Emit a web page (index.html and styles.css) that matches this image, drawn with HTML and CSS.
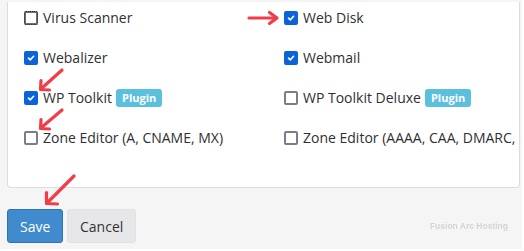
FILE: index.html
```html
<!DOCTYPE html>
<html>
<head>
<meta charset="utf-8">
<link rel="stylesheet" href="styles.css">
</head>
<body>
<div class="page">
  <div class="panel">
    <div class="grid">
      <label class="item"><span class="box focus"></span><span class="lbl">Virus Scanner</span></label>
      <label class="item"><span class="box on"><svg viewBox="0 0 14 14"><path d="M3.5 7.2 L6 9.6 L10.6 4.6" /></svg></span><span class="lbl">Web Disk</span></label>
      <label class="item"><span class="box on"><svg viewBox="0 0 14 14"><path d="M3.5 7.2 L6 9.6 L10.6 4.6" /></svg></span><span class="lbl">Webalizer</span></label>
      <label class="item"><span class="box on"><svg viewBox="0 0 14 14"><path d="M3.5 7.2 L6 9.6 L10.6 4.6" /></svg></span><span class="lbl">Webmail</span></label>
      <label class="item"><span class="box on"><svg viewBox="0 0 14 14"><path d="M3.5 7.2 L6 9.6 L10.6 4.6" /></svg></span><span class="lbl">WP Toolkit</span><span class="badge">Plugin</span></label>
      <label class="item"><span class="box"></span><span class="lbl">WP Toolkit Deluxe</span><span class="badge">Plugin</span></label>
      <label class="item"><span class="box"></span><span class="lbl">Zone Editor (A, CNAME, MX)</span></label>
      <label class="item"><span class="box"></span><span class="lbl">Zone Editor (AAAA, CAA, DMARC,</span></label>
    </div>
  </div>
  <div class="actions">
    <button class="btn save">Save</button>
    <button class="btn cancel">Cancel</button>
    <span class="mark">Fusion Arc Hosting</span>
  </div>
  <svg class="arrows" width="524" height="251" viewBox="0 0 524 251">
    <g stroke="#f03d48" stroke-width="3.2" fill="none" stroke-linecap="round" stroke-linejoin="round">
      <line x1="249" y1="18" x2="275" y2="18"/>
      <polyline points="269.5,12.5 277,18 269.5,23.5"/>
      <line x1="62" y1="70" x2="42" y2="88"/>
      <polyline points="41,80.5 40.5,89.5 49.5,90"/>
      <line x1="62" y1="110" x2="42" y2="127"/>
      <polyline points="41,119.5 40.5,128.5 49.5,129"/>
      <line x1="74" y1="176" x2="48" y2="202"/>
      <polyline points="46.5,192.5 46.5,203.5 57.5,204"/>
    </g>
  </svg>
</div>
</body>
</html>
```
FILE: styles.css
```css
html, body {
  margin: 0;
  padding: 0;
  background: #ffffff;
}
.page {
  position: relative;
  width: 522px;
  height: 249px;
  background: #f5f5f6;
  padding-top: 2px;
  box-sizing: border-box;
  font-family: "Open Sans", "Liberation Sans", sans-serif;
  color: #2f2f33;
  overflow: hidden;
}
.panel {
  margin-left: 7px;
  width: 513px;
  height: 186px;
  box-sizing: border-box;
  background: #fff;
  border: 1px solid #dcdcdc;
  border-top: none;
  border-radius: 0 0 4px 4px;
  padding: 6px 0 0 16px;
}
.grid {
  display: grid;
  grid-template-columns: 260px 230px;
  row-gap: 20px;
}
.item {
  display: flex;
  align-items: center;
  height: 20px;
  font-size: 14px;
  white-space: nowrap;
}
.box {
  width: 14px;
  height: 14px;
  box-sizing: border-box;
  border: 2px solid #7c7c8a;
  border-radius: 2px;
  margin-right: 5px;
  flex: none;
  display: flex;
}
.box.focus {
  border: 2px solid #6e6e7a;
  outline: 1px dotted #2a2a30;
  outline-offset: -1px;
}
.box.on {
  background: #0b63d8;
  border-color: #0b63d8;
}
.box svg {
  width: 100%;
  height: 100%;
}
.box svg path {
  fill: none;
  stroke: #fff;
  stroke-width: 2.2;
  stroke-linecap: round;
  stroke-linejoin: round;
}
.lbl {
  line-height: 20px;
}
.badge {
  margin-left: 4px;
  background: #5bc0de;
  color: #fff;
  font-weight: 700;
  font-size: 11px;
  line-height: 18px;
  height: 18px;
  padding: 0 6px;
  border-radius: 3px;
}
.actions {
  display: flex;
  align-items: center;
  gap: 4px;
  margin: 21px 0 0 7px;
  position: relative;
}
.btn {
  height: 34px;
  font-family: "Open Sans", "Liberation Sans", sans-serif;
  font-size: 14px;
  border-radius: 3px;
  padding: 0 12px;
  cursor: pointer;
}
.save {
  width: 56px;
  background: #3f8bcd;
  border: 1px solid #2f74b2;
  color: #fff;
}
.cancel {
  width: 69px;
  background: #e7e7ea;
  border: 1px solid #e2e2e6;
  color: #333;
}
.mark {
  margin-left: auto;
  margin-right: 14px;
  font-family: "Liberation Sans", Arial, sans-serif;
  font-weight: 700;
  font-size: 8.5px;
  color: #d4d4d6;
  filter: blur(0.4px);
}
.arrows {
  position: absolute;
  left: 0;
  top: 0;
  pointer-events: none;
}
```
